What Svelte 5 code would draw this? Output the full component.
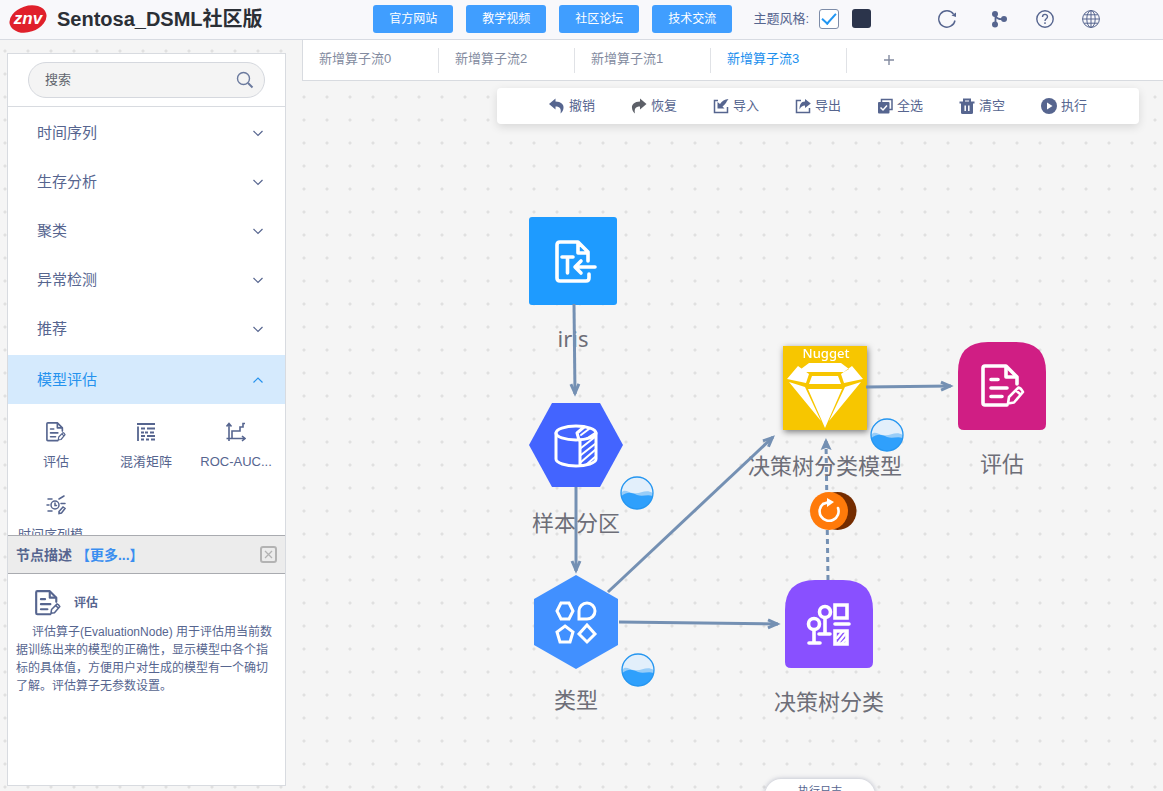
<script>
    const links = ['官方网站', '教学视频', '社区论坛', '技术交流'];
    const categories = ['时间序列', '生存分析', '聚类', '异常检测', '推荐'];

    const operators = [
        { name: '评估', icon: 'evaluate' },
        { name: '混淆矩阵', icon: 'matrix' },
        { name: 'ROC-AUC...', icon: 'roc' },
        { name: '时间序列模...', icon: 'series' },
    ];

    const tools = [
        { name: '撤销', icon: 'undo' },
        { name: '恢复', icon: 'redo' },
        { name: '导入', icon: 'import' },
        { name: '导出', icon: 'export' },
        { name: '全选', icon: 'select' },
        { name: '清空', icon: 'clear' },
        { name: '执行', icon: 'run' },
    ];

    // x and y are the centre of the shape on the canvas
    const nodes = [
        { x: 271, y: 180, type: 'source', label: 'iris' },
        { x: 274, y: 364, type: 'split', label: '样本分区' },
        { x: 274, y: 541, type: 'kind', label: '类型' },
        { x: 527, y: 543, type: 'tree', label: '决策树分类' },
        { x: 523, y: 307, type: 'nugget', label: '决策树分类模型' },
        { x: 700, y: 305, type: 'evaluate', label: '评估' },
    ];

    const edges = [
        'M272 223 L273 313',
        'M274 406 L274 490',
        'M306 511 L471 356',
        'M317 541 L476 543',
        'M564 306 L649 305',
    ];

    const badges = [
        { x: 335, y: 412 },
        { x: 336, y: 589 },
        { x: 585, y: 354 },
    ];

    let tabs = $state(['新增算子流0', '新增算子流2', '新增算子流1', '新增算子流3']);
    let activeTab = $state(3);
    let keyword = $state('');
    let lightTheme = $state(true);

    function addTab() {
        tabs.push('新增算子流' + tabs.length);
        activeTab = tabs.length - 1;
    }
</script>

{#snippet evaluateIcon()}
    <g fill="none" stroke="currentColor" stroke-width="3.6" stroke-linecap="round" stroke-linejoin="round">
        <path d="M26 41H4Q2 41 2 39V4Q2 2 4 2H25L36 13V20" />
        <path d="M25 3V13H35M10 15.500h7M10 24h16M10 32.500h11" />
        <path stroke-width="2.600" d="M28 33L37.500 23.500Q40 24 42 28L33 38.500L27 39.500ZM35 26.500l4 3.500" />
    </g>
{/snippet}

{#snippet operatorIcon(icon)}
    {#if icon === 'evaluate'}
        <svg viewBox="0 0 44 44">{@render evaluateIcon()}</svg>
    {:else if icon === 'matrix'}
        <svg viewBox="0 0 20 20" fill="none" stroke="currentColor" stroke-width="1.8">
            <path d="M1 2h18M2 4.500V19M5 6.500h4M11 6.500h8M5 10.500h3M9 10.500h3M14 10.500h4M5 14h4M11 14h8M5 17.500h3M10 17.500h3M15 17.500h4" />
        </svg>
    {:else if icon === 'roc'}
        <svg viewBox="0 0 20 20" fill="none" stroke="currentColor" stroke-width="1.6">
            <path d="M3 19V2M.5 4.500L3 1.500L5.500 4.500M.5 16.500H19M16 14l3 2.500L16 19M3 16.500h3V9h8V5h3V1.500h2" />
        </svg>
    {:else}
        <svg viewBox="0 0 20 20" fill="none" stroke="currentColor" stroke-width="1.5" stroke-linecap="round">
            <circle cx="9" cy="10" r="4" />
            <path d="M9 8v2.500h1.500M2 4h4M1 10h2M2 16h4M13 4l5-3M15 8.500h4M13 16.500l4-4.500l2 1.500l-3.500 4.500l-2.500.5z" />
        </svg>
    {/if}
{/snippet}

{#snippet toolIcon(icon)}
    <svg viewBox="0 0 16 16" fill="none" stroke="currentColor" stroke-width="1.5">
        {#if icon === 'undo'}
            <path fill="currentColor" stroke="none" d="M0 6L6.500.5V3.500C12 3.500 15 6.500 14.500 10C14.300 12.500 13 14.500 11.500 15.500C12.500 11 11 8.500 6.500 8.500V11.500Z" />
        {:else if icon === 'redo'}
            <path fill="#5d6068" stroke="none" d="M15.500 6L9 .5V3.500C3.500 3.500.5 6.500 1 10C1.200 12.500 2.500 14.500 4 15.500C3 11 4.500 8.500 9 8.500V11.500Z" />
        {:else if icon === 'import'}
            <path d="M5 2.500H1.500V14.500H14.500V9" />
            <path fill="currentColor" stroke="none" d="M4.500 10.500L4.500 4L7 6C9 3 11.500 1.500 15.500 1C14 2.500 13 6 9.500 8.500L11.500 10.500Z" />
        {:else if icon === 'export'}
            <path d="M6 2.500H1.500V14.500H14.500V10" />
            <path fill="currentColor" stroke="none" d="M10 1L15.800 5.500L10 10V7.500C7.500 7.500 6 8.500 4.500 11.500C4.500 6.500 6 3.500 10 3.500Z" />
        {:else if icon === 'select'}
            <path d="M4.500 4V1.500H15V11.500H12" />
            <rect x="1" y="4" width="11.500" height="11.500" rx="1" fill="currentColor" stroke="none" />
            <path stroke="#fff" d="M3.500 9.500l2.500 2.500l4-4.500" />
        {:else if icon === 'clear'}
            <path stroke-width="2" d="M.5 4.500H15.500M5 4V1.500H11V4" />
            <path fill="currentColor" stroke="none" d="M2 5H14V14.500Q14 16 12.500 16H3.500Q2 16 2 14.500Z" />
            <path stroke="#fff" d="M6.200 7.500V13M9.800 7.500V13" />
        {:else}
            <circle cx="8" cy="8" r="8" fill="currentColor" stroke="none" />
            <path fill="#fff" stroke="none" d="M6 4.500L11.500 8L6 11.500Z" />
        {/if}
    </svg>
{/snippet}

<div class="app">
    <header>
        <div class="brand">
            <svg class="logo" viewBox="0 0 40 32" role="img" aria-label="znv">
                <ellipse cx="20" cy="16" rx="19" ry="13" transform="rotate(-18 20 16)" fill="#e0202b" />
                <text x="20" y="21" text-anchor="middle" fill="#fff">znv</text>
            </svg>
            <h1>Sentosa_DSML社区版</h1>
        </div>
        <nav>
            {#each links as link}
                <a href="#top">{link}</a>
            {/each}
        </nav>
        <div class="theme">
            <label for="light">主题风格:</label>
            <input id="light" type="checkbox" bind:checked={lightTheme} />
            <button class="dark" aria-label="深色" onclick={() => (lightTheme = false)}></button>
        </div>
        <div class="actions">
            <button class="refresh" aria-label="刷新">
                <svg viewBox="0 0 18 18" fill="none" stroke="currentColor" stroke-width="1.4">
                    <path d="M17 10.500A8.200 8.200 0 1 1 15.500 4" />
                    <path fill="currentColor" stroke="none" d="M18 2.500V7L13.500 5.500Z" />
                </svg>
            </button>
            <button aria-label="流程">
                <svg viewBox="0 0 18 18" fill="currentColor" stroke="currentColor" stroke-width="1.8">
                    <path fill="none" d="M5.500 4V14M5.500 5C6 9 10 9.500 13 9" />
                    <g stroke="none"><circle cx="5" cy="4" r="3" /><circle cx="5" cy="14.500" r="3" /><circle cx="14" cy="9" r="3" /></g>
                </svg>
            </button>
            <button aria-label="帮助">
                <svg viewBox="0 0 18 18" fill="none" stroke="currentColor" stroke-width="1.4">
                    <circle cx="9" cy="9" r="8.200" />
                    <path d="M6.500 7C6.500 3.500 11.500 3.500 11.500 6.800C11.500 8.800 9 8.800 9 11M9 12.300V14" />
                </svg>
            </button>
            <button aria-label="语言">
                <svg viewBox="0 0 18 18" fill="none" stroke="currentColor">
                    <circle cx="9" cy="9" r="8.400" />
                    <ellipse cx="9" cy="9" rx="4.200" ry="8.400" />
                    <path d="M9 .6V17.400M.6 9H17.400M2 4.800H16M2 13.200H16" />
                </svg>
            </button>
        </div>
    </header>

    <div class="body">
        <aside>
            <div class="search">
                <div class="search-box">
                    <input bind:value={keyword} placeholder="搜索" aria-label="搜索" />
                    <svg viewBox="0 0 18 18" fill="none" stroke="currentColor" stroke-width="1.400">
                        <circle cx="7.500" cy="7.500" r="6" />
                        <path stroke-width="2" d="M12 12L16.500 16.500" />
                    </svg>
                </div>
            </div>

            <div class="catalog">
                {#each categories as category}
                    <button class="category">
                        {category}
                        <svg viewBox="0 0 10 10" fill="none" stroke="currentColor" stroke-width="1.200"><path d="M.5 3L5 7.500L9.500 3" /></svg>
                    </button>
                {/each}
                <button class="category active">
                    模型评估
                    <svg viewBox="0 0 10 10" fill="none" stroke="currentColor" stroke-width="1.200"><path d="M.5 7.500L5 3L9.500 7.500" /></svg>
                </button>
                <div class="operators">
                    {#each operators as operator}
                        <div class="operator">
                            {@render operatorIcon(operator.icon)}
                            <span>{operator.name}</span>
                        </div>
                    {/each}
                </div>
            </div>

            <section class="description">
                <div class="description-head">
                    <h2>节点描述 <a href="#more">【更多...】</a></h2>
                    <button aria-label="关闭">
                        <svg viewBox="0 0 17 17" fill="none" stroke="currentColor">
                            <rect x="1" y="1" width="15" height="15" rx="2" stroke-width="2" />
                            <path stroke-width="1.300" d="M5 5L12 12M12 5L5 12" />
                        </svg>
                    </button>
                </div>
                <div class="description-body">
                    <h3>
                        <svg viewBox="0 0 44 44">{@render evaluateIcon()}</svg>
                        评估
                    </h3>
                    <p>评估算子(EvaluationNode) 用于评估用当前数据训练出来的模型的正确性，显示模型中各个指标的具体值，方便用户对生成的模型有一个确切了解。评估算子无参数设置。</p>
                </div>
            </section>
        </aside>

        <main>
            <div class="tabs">
                {#each tabs as tab, i}
                    <button class="tab" class:active={activeTab === i} onclick={() => (activeTab = i)}>
                        {tab}
                    </button>
                {/each}
                <button class="add" aria-label="新增" onclick={addTab}>
                    <svg viewBox="0 0 12 12" stroke="currentColor" stroke-width="1.400"><path d="M1 6H11M6 1V11" /></svg>
                </button>
            </div>

            <div class="canvas">
                <div class="toolbar">
                    {#each tools as tool}
                        <button>{@render toolIcon(tool.icon)}{tool.name}</button>
                    {/each}
                </div>

                {#each nodes as node}
                    <div class="node" style="left: {node.x - 47}px; top: {node.y - 47}px">
                        <svg class:shadow={node.type === 'nugget'} viewBox="-47 -47 94 94" fill="none" stroke="#fff" stroke-width="3.6" stroke-linecap="round" stroke-linejoin="round">
                            {#if node.type === 'source'}
                                <rect x="-44" y="-44" width="88" height="88" rx="3" fill="#1e9bff" stroke="none" />
                                <path d="M16 13V17Q16 20 13 20H-13Q-16 20 -16 17V-16Q-16 -19 -13 -19H5L15 -9V0M5 -18V-8H15" />
                                <path d="M-11 -4H0M-5.500 -4V12M22 6H3M8 0L2 6L8 12" />
                            {:else if node.type === 'split'}
                                <path d="M-47 0L-24 -42H24L47 0L24 42H-24Z" fill="#4364ff" stroke="none" />
                                <g stroke-width="3">
                                    <ellipse cx="0" cy="-12" rx="20" ry="7" />
                                    <path d="M-20 -12V14C-20 18 -10 21 0 21C10 21 20 18 20 14V-12M4 -5V20M3 -5L1 -12L8 -18" />
                                    <path stroke-width="2" d="M5 -10L13 -16M10 -6L19 -12M5 3L19 -8M5 10L19 -1M5 17L19 5M11 19L19 12" />
                                </g>
                            {:else if node.type === 'kind'}
                                <path d="M0 -47L42 -23V23L0 47L-42 23V-23Z" fill="#4190ff" stroke="none" />
                                <g stroke-width="3" stroke-linejoin="miter">
                                    <path d="M-19 -11L-15 -19H-7L-3 -11L-7 -3H-15ZM-11 4L-3 10L-6 20H-16L-19 10ZM11 3L19 12L11 20L3 12Z" />
                                    <path d="M3 -3V-11A8 8 0 1 1 11 -3Z" />
                                </g>
                            {:else if node.type === 'tree'}
                                <path d="M-44 38V-14Q-44 -44 -14 -44H14Q44 -44 44 -14V38Q44 44 38 44H-38Q-44 44 -44 38Z" fill="#8950ff" stroke="none" />
                                <circle cx="-15" cy="0" r="5.500" />
                                <circle cx="-4" cy="-12" r="5.500" />
                                <path d="M-15 6V19M-20 19H-9M-4 -6V10M-10 10H1" />
                                <path stroke-linejoin="miter" d="M6 -19H18V-6H6ZM6 7H18V20H6ZM6 0H20" />
                                <path stroke-width="2.400" d="M8 14L13 8M9 19L17 9M13 19L17 15" />
                            {:else if node.type === 'nugget'}
                                <rect x="-42" y="-42" width="84" height="84" fill="#f7c600" stroke="none" />
                                <g fill="#fff" stroke="none">
                                    <text x="1" y="-30" text-anchor="middle">Nugget</text>
                                    <path d="M-16 -25H16L24 -19L19 -16H-19L-24 -19ZM-27 -22L-16 -14L-19 -5L-38 -9ZM27 -22L16 -14L19 -5L38 -9ZM-13 -12H13L16 -4H-16ZM-36 -6L-20 -1L-4 33ZM36 -6L20 -1L4 33ZM-17 1H17L0 40Z" />
                                </g>
                            {:else}
                                <path d="M-44 38V-14Q-44 -44 -14 -44H14Q44 -44 44 -14V38Q44 44 38 44H-38Q-44 44 -44 38Z" fill="#d01e84" stroke="none" />
                                <g class="inner" transform="translate(-21 -22)">{@render evaluateIcon()}</g>
                            {/if}
                        </svg>
                        <span>{node.label}</span>
                    </div>
                {/each}

                <svg class="edges" fill="none" stroke="#7490b3" stroke-width="3">
                    <defs>
                        <marker id="arrow" viewBox="-14 -7 20 14" refX="2" refY="0" markerWidth="20" markerHeight="14" markerUnits="userSpaceOnUse" orient="auto">
                            <path d="M-8 -4L1 0L-8 4" fill="none" stroke="#7490b3" stroke-width="3" />
                        </marker>
                        <marker id="arrow-solid" viewBox="-14 -7 14 14" refX="-3" refY="0" markerWidth="14" markerHeight="14" markerUnits="userSpaceOnUse" orient="auto">
                            <path d="M-12 -5.500L0 0L-12 5.500L-10 0Z" fill="#7490b3" stroke="none" />
                        </marker>
                    </defs>
                    {#each edges as edge}
                        <path d={edge} marker-end="url(#arrow)" />
                    {/each}
                    <path d="M526 499L524 360" stroke-dasharray="5 4" marker-end="url(#arrow-solid)" />
                </svg>

                {#each badges as badge}
                    <svg class="badge" style="left: {badge.x - 17}px; top: {badge.y - 17}px" viewBox="-17 -17 34 34">
                        <circle r="16" fill="#e2effb" />
                        <path fill="#98cdf8" d="M-16 0C-12 -5 -9 0 -4 0C3 2 8 -5 16 0A16 16 0 0 1 -16 0Z" />
                        <path fill="#2fa0fc" d="M-15.700 3C-9 -2 -5 0 0 2C6 4 10 1 15.700 3A16 16 0 0 1 -15.700 3Z" />
                        <circle r="16" fill="none" stroke="#2596f0" stroke-width="1.300" />
                    </svg>
                {/each}

                <button class="retrain" aria-label="重新训练">
                    <svg viewBox="-19 -19 48 38">
                        <circle cx="8.500" cy="0" r="19" fill="#742c00" />
                        <circle r="19" fill="#ff7a0a" />
                        <path d="M-6 -7A9.500 9.500 0 1 0 9 -3" fill="none" stroke="#fff" stroke-width="2.600" stroke-linecap="round" />
                        <path d="M-2 -13L5 -9L-2 -4Z" fill="#fff" />
                        <path d="M-6 -7L0 -9" stroke="#fff" stroke-width="2.600" />
                    </svg>
                </button>

                <button class="log">执行日志</button>
            </div>
        </main>
    </div>
</div>

<style>
    :global(body) {
        margin: 0;
    }

    .app {
        display: flex;
        flex-direction: column;
        height: 100vh;
        overflow: hidden;
        color: #56658f;
        font-family: "Liberation Sans", "Noto Sans CJK SC", sans-serif;
        font-size: 13px;
        line-height: 20px;
        background: #f5f5f5 radial-gradient(circle at 5px 5px, #e0e0e0 1px, transparent 2px) 0 0 / 23px 23px;
    }

    .app * {
        box-sizing: border-box;
    }

    svg {
        display: block;
        flex: none;
    }

    h1, h2, h3, p {
        margin: 0;
    }

    a {
        text-decoration: none;
    }

    button {
        padding: 0;
        border: none;
        background: none;
        color: inherit;
        font: inherit;
        cursor: pointer;
    }

    header {
        display: flex;
        align-items: center;
        flex: none;
        height: 40px;
        padding: 0 63px 2px 8px;
        border-bottom: 1px solid #d8dbe2;
        background: #f8f8fb;
    }

    .brand {
        display: flex;
        align-items: center;
        gap: 9px;
        margin-right: auto;
        color: #2b2f36;
    }

    .logo {
        width: 40px;
        height: 32px;
    }

    .logo text {
        font: italic bold 17px "Liberation Sans", sans-serif;
    }

    h1 {
        font-size: 20px;
        line-height: 30px;
        white-space: nowrap;
    }

    nav {
        display: flex;
        gap: 13px;
    }

    nav a {
        width: 80px;
        border-radius: 3px;
        background: #409eff;
        color: #fff;
        font-size: 12px;
        line-height: 28px;
        text-align: center;
    }

    .theme {
        display: flex;
        align-items: center;
        margin: 0 67px 0 21px;
    }

    .theme input {
        appearance: none;
        display: flex;
        justify-content: center;
        width: 20px;
        height: 20px;
        margin: 0 13px 0 10px;
        border: 1px solid #7d8ca8;
        border-radius: 3px;
        background: #fff;
    }

    .theme input:checked::after {
        content: "";
        width: 6px;
        height: 12px;
        border: solid #2196f3;
        border-width: 0 2px 2px 0;
        transform: rotate(42deg);
    }

    .dark {
        width: 19px;
        height: 19px;
        border-radius: 3px;
        background: #2b344b;
    }

    .actions {
        display: flex;
        gap: 28px;
    }

    .actions svg {
        width: 18px;
        height: 18px;
    }

    .refresh {
        margin-right: 6px;
    }

    .body {
        display: flex;
        flex: 1;
        min-height: 0;
    }

    aside {
        display: flex;
        flex-direction: column;
        flex: none;
        width: 279px;
        margin: 13px 16px 5px 7px;
        border: 1px solid #d8dbe0;
        background: #fff;
    }

    .search {
        padding: 8px 20px;
        border-bottom: 1px solid #d8dbe0;
    }

    .search-box {
        display: flex;
        align-items: center;
        height: 36px;
        padding: 0 10px 0 16px;
        border: 1px solid #d5d8de;
        border-radius: 18px;
        background: #f4f4f4;
    }

    .search-box input {
        flex: 1;
        min-width: 0;
        padding: 0;
        border: none;
        outline: none;
        background: none;
        font: inherit;
    }

    .search-box input::placeholder {
        color: #62666e;
    }

    .search-box svg {
        width: 18px;
        height: 18px;
        color: #6b7a9e;
    }

    .catalog {
        flex: 1;
        min-height: 0;
        padding-top: 1px;
        overflow: hidden;
    }

    .category {
        display: flex;
        align-items: center;
        justify-content: space-between;
        width: 100%;
        height: 49px;
        padding: 0 22px 0 29px;
        font-size: 15px;
    }

    .category svg {
        width: 10px;
        height: 10px;
    }

    .category.active {
        margin-top: 2px;
        background: #d5eafd;
        color: #2592ee;
    }

    .operators {
        display: grid;
        grid-template-columns: repeat(3, 90px);
        row-gap: 23px;
        padding: 18px 3px 0;
    }

    .operator {
        display: flex;
        flex-direction: column;
        align-items: center;
        gap: 10px;
        white-space: nowrap;
    }

    .operator svg {
        width: 20px;
        height: 20px;
    }

    .description-head {
        display: flex;
        align-items: center;
        justify-content: space-between;
        height: 39px;
        padding: 0 8px;
        border: solid #a9abb0;
        border-width: 1px 0;
        background: #ececec;
    }

    h2 {
        font-size: 14px;
    }

    h2 a {
        color: #3a8ef0;
    }

    .description-head button {
        color: #b3b3b3;
    }

    .description-head svg {
        width: 17px;
        height: 17px;
    }

    .description-body {
        min-height: 211px;
        padding: 15px 9px 0 8px;
        font-size: 12px;
    }

    h3 {
        display: flex;
        align-items: center;
        gap: 13px;
        height: 28px;
        padding-left: 19px;
        font-size: 12px;
    }

    h3 svg {
        width: 26px;
        height: 26px;
    }

    p {
        padding-top: 6px;
        line-height: 18px;
        text-indent: 16px;
    }

    main {
        display: flex;
        flex-direction: column;
        flex: 1;
        min-width: 0;
    }

    .tabs {
        display: flex;
        align-items: center;
        flex: none;
        height: 41px;
        border: solid #d8dbe0;
        border-width: 0 0 1px 1px;
        background: #fff;
        color: #838ba0;
    }

    .tab {
        width: 136px;
        height: 25px;
        padding: 0 0 2px 16px;
        border-right: 1px solid #e0e2e6;
        text-align: left;
    }

    .tab.active {
        color: #1b8fee;
    }

    .add {
        margin-left: 36px;
    }

    .add svg {
        width: 12px;
        height: 12px;
    }

    .canvas {
        position: relative;
        flex: 1;
        overflow: hidden;
    }

    .toolbar {
        display: flex;
        align-items: center;
        justify-content: center;
        gap: 36px;
        height: 36px;
        margin: 7px 24px 0 195px;
        padding-bottom: 1px;
        border-radius: 4px;
        background: #fff;
        box-shadow: 0 3px 10px rgba(0, 0, 0, 0.12);
    }

    .toolbar button {
        display: flex;
        align-items: center;
        gap: 4px;
        white-space: nowrap;
    }

    .toolbar svg {
        width: 16px;
        height: 16px;
    }

    .node {
        position: absolute;
        display: flex;
        flex-direction: column;
        align-items: center;
        gap: 15px;
        width: 94px;
        color: #6d6e78;
        font-family: "Noto Sans", "Noto Sans CJK SC", sans-serif;
        font-size: 22px;
        line-height: 30px;
        white-space: nowrap;
    }

    .node svg {
        width: 94px;
        height: 94px;
        overflow: visible;
    }

    .node text {
        font-size: 13px;
        font-weight: 500;
    }

    .inner {
        color: #fff;
    }

    .shadow {
        filter: drop-shadow(1px 2px 3px rgba(0, 0, 0, 0.5));
    }

    .edges {
        position: absolute;
        inset: 0;
        width: 100%;
        height: 100%;
        pointer-events: none;
    }

    .badge {
        position: absolute;
        width: 34px;
        height: 34px;
    }

    .retrain {
        position: absolute;
        left: 508px;
        top: 411px;
    }

    .retrain svg {
        width: 48px;
        height: 38px;
    }

    .log {
        position: absolute;
        bottom: -12px;
        left: 463px;
        width: 110px;
        height: 24px;
        border-radius: 16px 16px 0 0;
        background: #fff;
        box-shadow: 0 0 5px rgba(60, 70, 110, 0.35);
        font-size: 11px;
    }
</style>
